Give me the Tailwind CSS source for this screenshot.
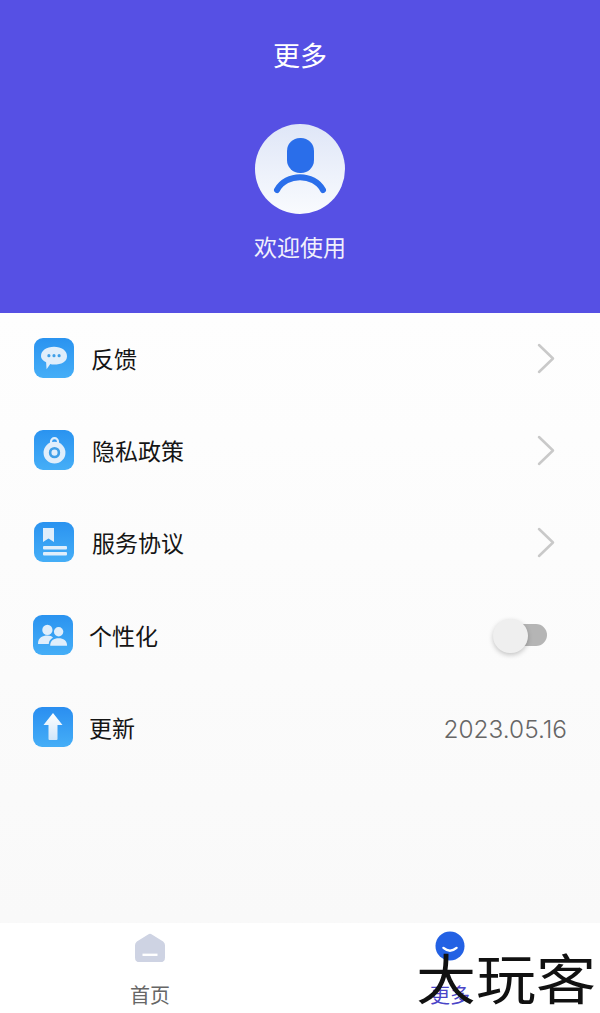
<!DOCTYPE html>
<html lang="zh-CN">
<head>
  <meta charset="UTF-8" />
  <meta name="viewport" content="width=device-width, initial-scale=1.0" />
  <title>更多</title>
  <script src="https://cdn.jsdelivr.net/npm/@tailwindcss/browser@4"></script>
</head>
<body class="relative w-[600px] h-[1013px] overflow-hidden flex flex-col bg-[#fafafa] font-['Noto_Sans_CJK_SC','Noto_Sans',sans-serif]">

  <header class="h-[313px] shrink-0 bg-[#5650e4] flex flex-col items-center text-white">
    <h1 class="mt-[35px] h-[40px] text-[27px] leading-[40px] font-normal">更多</h1>
    <div class="mt-[49px] w-[90px] h-[90px] rounded-full bg-gradient-to-b from-[#dfe6f7] to-[#f9fbfe] flex items-center justify-center">
      <svg width="54" height="62" viewBox="0 0 54 62">
        <rect x="14" y="0" width="27" height="35" rx="13" fill="#2a6eea" />
        <path d="M4 52 C13 35 41 35 50 52" fill="none" stroke="#2a6eea" stroke-width="6" stroke-linecap="round" />
      </svg>
    </div>
    <p class="mt-[15px] text-[23px] leading-[34px] text-[#f1f0fc]">欢迎使用</p>
  </header>

  <main class="flex-1 bg-gradient-to-b from-[#fefefe] to-[#f9f9f9] flex flex-col">
    <div class="-mt-px h-[92px] flex items-center pl-[34px] pr-[45px]">
      <div class="w-10 h-10 rounded-[9px] bg-gradient-to-b from-[#2a93f0] to-[#45aef7] flex items-center justify-center">
        <svg width="28" height="26" viewBox="0 0 30 28">
          <path d="M15 2 C23 2 29 6 29 12 C29 18 23 21 15 21 C13.500 21 12 21 11 20.500 L7 26 L6.500 18.500 C3 16.500 1 14.500 1 12 C1 6 7 2 15 2 Z" fill="#e0eefb" />
          <circle cx="9.500" cy="11.500" r="1.700" fill="#3f9fe8" />
          <circle cx="15" cy="11.500" r="1.700" fill="#3f9fe8" />
          <circle cx="20.500" cy="11.500" r="1.700" fill="#3f9fe8" />
        </svg>
      </div>
      <span class="ml-[17px] text-[23px] leading-[34px] text-[#151515]">反馈</span>
      <svg class="ml-auto" width="18" height="31" viewBox="0 0 18 31"><path d="M2 2 L16 15.500 L2 29" fill="none" stroke="#c9c9c9" stroke-width="2.500" stroke-linecap="round" stroke-linejoin="round" /></svg>
    </div>

    <div class="h-[92px] flex items-center pl-[34px] pr-[45px]">
      <div class="w-10 h-10 rounded-[9px] bg-gradient-to-b from-[#2a93f0] to-[#45aef7] flex items-center justify-center">
        <svg width="23" height="28" viewBox="0 0 26 32">
          <path d="M9 9 V6.500 A4 4 0 0 1 17 6.500 V9" fill="none" stroke="#e0eefb" stroke-width="2.500" />
          <circle cx="13" cy="19" r="12.500" fill="#e0eefb" />
          <circle cx="13" cy="19" r="5" fill="none" stroke="#3f9fe8" stroke-width="3" />
        </svg>
      </div>
      <span class="ml-[18px] text-[23px] leading-[34px] text-[#151515]">隐私政策</span>
      <svg class="ml-auto" width="18" height="31" viewBox="0 0 18 31"><path d="M2 2 L16 15.500 L2 29" fill="none" stroke="#c9c9c9" stroke-width="2.500" stroke-linecap="round" stroke-linejoin="round" /></svg>
    </div>

    <div class="h-[92px] flex items-center pl-[34px] pr-[45px]">
      <div class="w-10 h-10 rounded-[9px] bg-gradient-to-b from-[#2a93f0] to-[#45aef7] flex items-center justify-center">
        <svg width="40" height="40" viewBox="0 0 40 40">
          <path d="M9 6 H20 V20 L14.500 16.500 L9 20 Z" fill="#e0eefb" />
          <rect x="9" y="24" width="24" height="3.500" rx="1" fill="#e0eefb" />
          <rect x="9" y="30" width="24" height="3.500" rx="1" fill="#e0eefb" />
        </svg>
      </div>
      <span class="ml-[18px] text-[23px] leading-[34px] text-[#151515]">服务协议</span>
      <svg class="ml-auto" width="18" height="31" viewBox="0 0 18 31"><path d="M2 2 L16 15.500 L2 29" fill="none" stroke="#c9c9c9" stroke-width="2.500" stroke-linecap="round" stroke-linejoin="round" /></svg>
    </div>

    <div class="mt-px h-[92px] flex items-center pl-[33px] pr-[53px]">
      <div class="w-10 h-10 rounded-[9px] bg-gradient-to-b from-[#2a93f0] to-[#45aef7] flex items-center justify-center">
        <svg width="30" height="23" viewBox="0 0 32 24">
          <circle cx="10" cy="6" r="5.500" fill="#e0eefb" />
          <path d="M0 21 C0 14 5 12 10 12 C13 12 15 13 16 14 C13 16 11.500 18 11.500 21 Z" fill="#e0eefb" />
          <circle cx="22" cy="8" r="5" fill="#e0eefb" />
          <path d="M13 23 C13 17 17 15 22 15 C27 15 31 17 31 23 Z" fill="#e0eefb" />
        </svg>
      </div>
      <span class="ml-[16px] text-[23px] leading-[34px] text-[#151515]">个性化</span>
      <div class="ml-auto relative w-[42px] h-[22px] rounded-full bg-[#b5b5b5]">
        <div class="absolute left-[-12px] top-[-5px] w-[35px] h-[34px] rounded-full bg-[#efefef] shadow-[0_2px_5px_rgba(0,0,0,0.22)]"></div>
      </div>
    </div>

    <div class="h-[92px] flex items-center pl-[33px] pr-[33px]">
      <div class="w-10 h-10 rounded-[9px] bg-gradient-to-b from-[#2a8ef0] to-[#45aef7] flex items-center justify-center">
        <svg width="20" height="28" viewBox="0 0 20 28">
          <defs>
            <linearGradient id="arrow" x1="0" y1="0" x2="0" y2="1">
              <stop offset="0" stop-color="#ffffff" />
              <stop offset="1" stop-color="#cfe6fa" />
            </linearGradient>
          </defs>
          <path d="M10 0 L19.500 12 H14.500 V26 Q14.500 27 13.500 27 H6.500 Q5.500 27 5.500 26 V12 H0.500 Z" fill="url(#arrow)" />
        </svg>
      </div>
      <span class="ml-[16px] text-[23px] leading-[34px] text-[#151515]">更新</span>
      <span class="ml-auto pt-[4px] text-[24.4px] leading-[34px] font-light text-[#666] font-['Inter',sans-serif]">2023.05.16</span>
    </div>
  </main>

  <nav class="h-[90px] shrink-0 bg-white flex">
    <div class="flex-1 flex flex-col items-center pt-[10px]">
      <svg width="30" height="30" viewBox="0 0 32 32">
        <path d="M14 1.500 Q16 0 18 1.500 L30 9 Q32 10.500 32 13 V26 Q32 31 27 31 H5 Q0 31 0 26 V13 Q0 10.500 2 9 Z" fill="#ced3e3" />
        <rect x="8" y="22" width="16" height="2.500" fill="#ffffff" />
      </svg>
      <span class="mt-[17px] text-[20px] leading-[30px] text-[#666]">首页</span>
    </div>
    <div class="flex-1 flex flex-col items-center pt-[8px]">
      <svg width="30" height="30" viewBox="0 0 32 32">
        <circle cx="16" cy="16" r="15.500" fill="#2361e4" />
        <path d="M9 18 Q16 24 23 18" fill="none" stroke="#ffffff" stroke-width="2.500" stroke-linecap="round" />
      </svg>
      <span class="mt-[19px] text-[20px] leading-[30px] text-[#4a45c8]">更多</span>
    </div>
  </nav>

  <!-- watermark over the tab bar -->
  <div class="absolute left-[416px] top-[941px] text-[60px] leading-[64px] font-normal text-[#111] whitespace-nowrap scale-y-90 origin-bottom">大玩客</div>

</body>
</html>
